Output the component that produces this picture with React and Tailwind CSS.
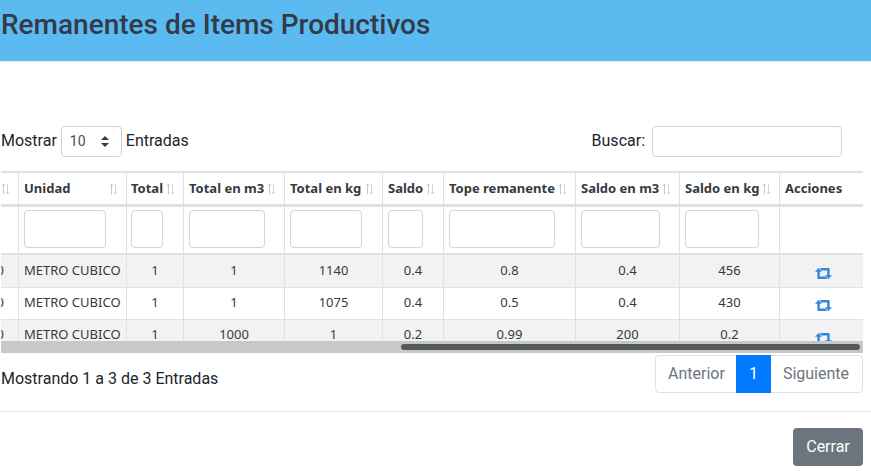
const cols = [
  { label: "", w: 60, filter: 0 },
  { label: "Unidad", w: 108, filter: 82 },
  { label: "Total", w: 57, filter: 32 },
  { label: "Total en m3", w: 101, filter: 76 },
  { label: "Total en kg", w: 98, filter: 72 },
  { label: "Saldo", w: 61, filter: 35 },
  { label: "Tope remanente", w: 132, filter: 106 },
  { label: "Saldo en m3", w: 104, filter: 79 },
  { label: "Saldo en kg", w: 100, filter: 74 },
  { label: "Acciones", w: 84, filter: 0 },
];

const rows = [
  ["0", "METRO CUBICO", "1", "1", "1140", "0.4", "0.8", "0.4", "456"],
  ["0", "METRO CUBICO", "1", "1", "1075", "0.4", "0.5", "0.4", "430"],
  ["0", "METRO CUBICO", "1", "1000", "1", "0.2", "0.99", "200", "0.2"],
];

function SortIcon() {
  return (
    <svg width="9" height="12" viewBox="0 0 9 12" fill="none" className="shrink-0 mr-[3px] mt-px">
      <path d="M2.5 11.5V1M1 2.8L2.5 1L4 2.8" stroke="#c6cacd" strokeWidth="1" />
      <path d="M6.5 0.5V11M5 9.2L6.5 11L8 9.2" stroke="#d2d5d8" strokeWidth="1" />
    </svg>
  );
}

function RetweetIcon() {
  return (
    <svg width="17" height="11" viewBox="0 0 17 11" fill="#2f88dc" className="inline-block">
      <path d="M3.5 0L7 3.8H4.8V8.6H10.6L12.4 11H3.3C2.8 11 2.4 10.6 2.4 10.1V3.8H0Z" />
      <path d="M13.5 11L10 7.2H12.2V2.4H6.4L4.6 0H13.7C14.2 0 14.6 0.4 14.6 0.9V7.2H17Z" />
    </svg>
  );
}

export default function App() {
  return (
    <div className="w-[871px] h-[471px] overflow-hidden bg-white font-['Roboto',sans-serif] text-[16px] text-[#212529]">
      <div className="h-[62px] bg-[#5bbaf0] border-b border-[#e8eef2] pl-px pt-[8px]">
        <h1 className="text-[28px] leading-[34px] font-medium text-[#343a4a]">Remanentes de Items Productivos</h1>
      </div>

      <div className="flex items-center justify-between h-[31px] mt-[64px] pl-px pr-[29px]">
        <div className="flex items-center">
          <span className="-mt-[2px]">Mostrar</span>
          <div className="flex items-center justify-between w-[61px] h-[31px] mx-[4px] pl-[8px] pr-[12px] border border-[#ced4da] rounded-[4px] text-[14px] text-[#495057]">
            <span>10</span>
            <svg width="8" height="11" viewBox="0 0 8 11" fill="#343a40">
              <path d="M4 0L8 4H0zM4 11L0 7H8z" />
            </svg>
          </div>
          <span className="-mt-[2px]">Entradas</span>
        </div>
        <div className="flex items-center">
          <span className="-mt-[2px]">Buscar:</span>
          <input className="w-[190px] h-[31px] ml-[7px] border border-[#ced4da] rounded-[4px]" />
        </div>
      </div>

      <div className="w-[862px] ml-px mt-[14px] h-[170px] overflow-hidden font-['Noto_Sans',sans-serif] text-[13px] text-[#343a40]">
        <table className="table-fixed border-collapse -ml-[43px] w-[905px]">
          <colgroup>
            {cols.map((c, i) => (
              <col key={i} style={{ width: c.w }} />
            ))}
          </colgroup>
          <thead>
            <tr className="h-[33px]">
              {cols.map((c, i) => (
                <th
                  key={i}
                  className={
                    i === 2
                      ? "border border-[#dee2e6] border-t-[2px] border-b-[3px] pl-[4px] pr-[5px] text-left font-bold"
                      : "border border-[#dee2e6] border-t-[2px] border-b-[3px] px-[5px] text-left font-bold"
                  }
                >
                  <div className="flex items-center justify-between whitespace-nowrap">
                    <span>{c.label}</span>
                    {i < 9 && <SortIcon />}
                  </div>
                </th>
              ))}
            </tr>
            <tr className="h-[49px]">
              {cols.map((c, i) => (
                <th
                  key={i}
                  className={
                    i === 2
                      ? "border border-[#dee2e6] border-b-[2px] pl-[4px] pr-[5px] pb-[2px]"
                      : "border border-[#dee2e6] border-b-[2px] px-[5px] pb-[2px]"
                  }
                >
                  {c.filter > 0 && (
                    <input
                      style={{ width: c.filter }}
                      className="block h-[38px] border border-[#ced4da] rounded-[4px] bg-white"
                    />
                  )}
                </th>
              ))}
            </tr>
          </thead>
          <tbody>
            {rows.map((r, ri) => (
              <tr key={ri} className={ri % 2 === 0 ? "bg-[#f2f2f2] h-[33px]" : "bg-white h-[32px]"}>
                {r.map((v, ci) => (
                  <td
                    key={ci}
                    className={
                      ci === 0
                        ? "border border-[#dee2e6] pr-[14px] pb-px text-right whitespace-nowrap"
                        : ci === 1
                        ? "border border-[#dee2e6] px-[5px] pb-px text-left whitespace-nowrap"
                        : "border border-[#dee2e6] px-[5px] pb-px text-center whitespace-nowrap"
                    }
                  >
                    {v}
                  </td>
                ))}
                <td className="border border-[#dee2e6] px-[5px] text-center">
                  <div className="flex justify-center pt-[5px] pl-[4px]">
                    <RetweetIcon />
                  </div>
                </td>
              </tr>
            ))}
          </tbody>
        </table>
      </div>

      <div className="w-[862px] ml-px h-[12px] bg-[#c8c8c8] pt-[3px] pl-[400px]">
        <div className="w-[459px] h-[6px] rounded-full bg-[#555a5a]" />
      </div>

      <div className="flex items-start justify-between mt-[2px] pl-px pr-[8px]">
        <span className="mt-[12px] leading-[24px]">Mostrando 1 a 3 de 3 Entradas</span>
        <div className="flex h-[38px] items-stretch rounded-[4px] border border-[#dee2e6] text-[#6c757d]">
          <span className="flex items-center pl-[12px] pr-[11px]">Anterior</span>
          <span className="flex items-center px-[13px] bg-[#007bff] text-white -my-px">1</span>
          <span className="flex items-center pl-[12px] pr-[13px]">Siguiente</span>
        </div>
      </div>

      <div className="mt-[18px] border-t border-[#e4e4ec]" />

      <div className="flex justify-end mt-[16px] pr-[8px]">
        <button className="w-[70px] h-[38px] rounded-[4px] bg-[#6c757d] text-white">Cerrar</button>
      </div>
    </div>
  );
}
